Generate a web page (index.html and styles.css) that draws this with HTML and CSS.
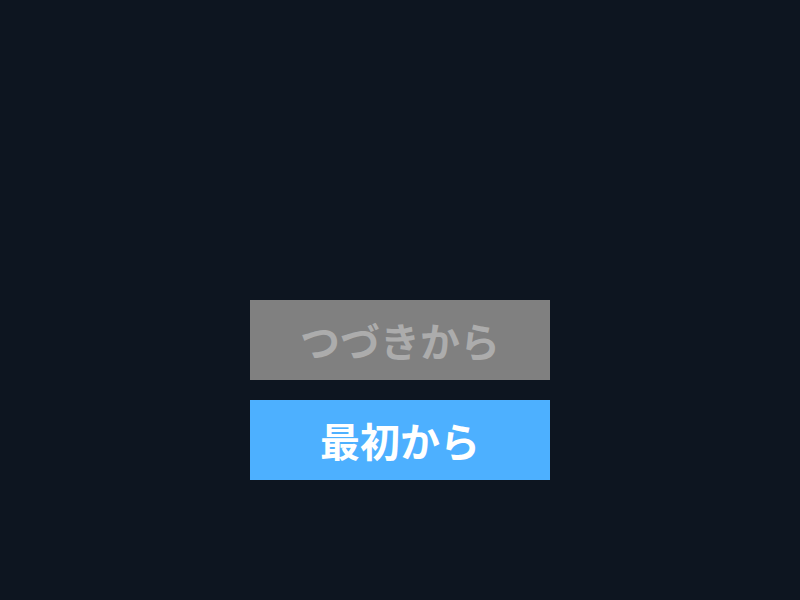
FILE: index.html
```html
<!DOCTYPE html>
<html lang="ja">
<head>
<meta charset="utf-8">
<title>タイトル</title>
<link rel="stylesheet" href="styles.css">
</head>
<body>
<div class="screen">
    <div class="titleArea"></div>
    <div class="menu">
        <button class="menuBtn disabled" disabled>つづきから</button>
        <button class="menuBtn start">最初から</button>
    </div>
</div>
</body>
</html>
```

FILE: styles.css
```css
html,body{margin:0;padding:0;}
body{background:#0d1520;font-family:"Noto Sans CJK JP","Noto Sans",sans-serif;}
.screen{width:800px;height:600px;display:flex;flex-direction:column;align-items:center;}
.titleArea{height:300px;flex:none;}
.menu{display:flex;flex-direction:column;gap:20px;}
.menuBtn{width:300px;height:80px;border:0;margin:0;padding:0;font-family:inherit;font-size:40px;font-weight:bold;line-height:80px;}
.menuBtn.disabled{background:#808080;color:#acacac;}
.menuBtn.start{background:#4db0ff;color:#fff;}
```
